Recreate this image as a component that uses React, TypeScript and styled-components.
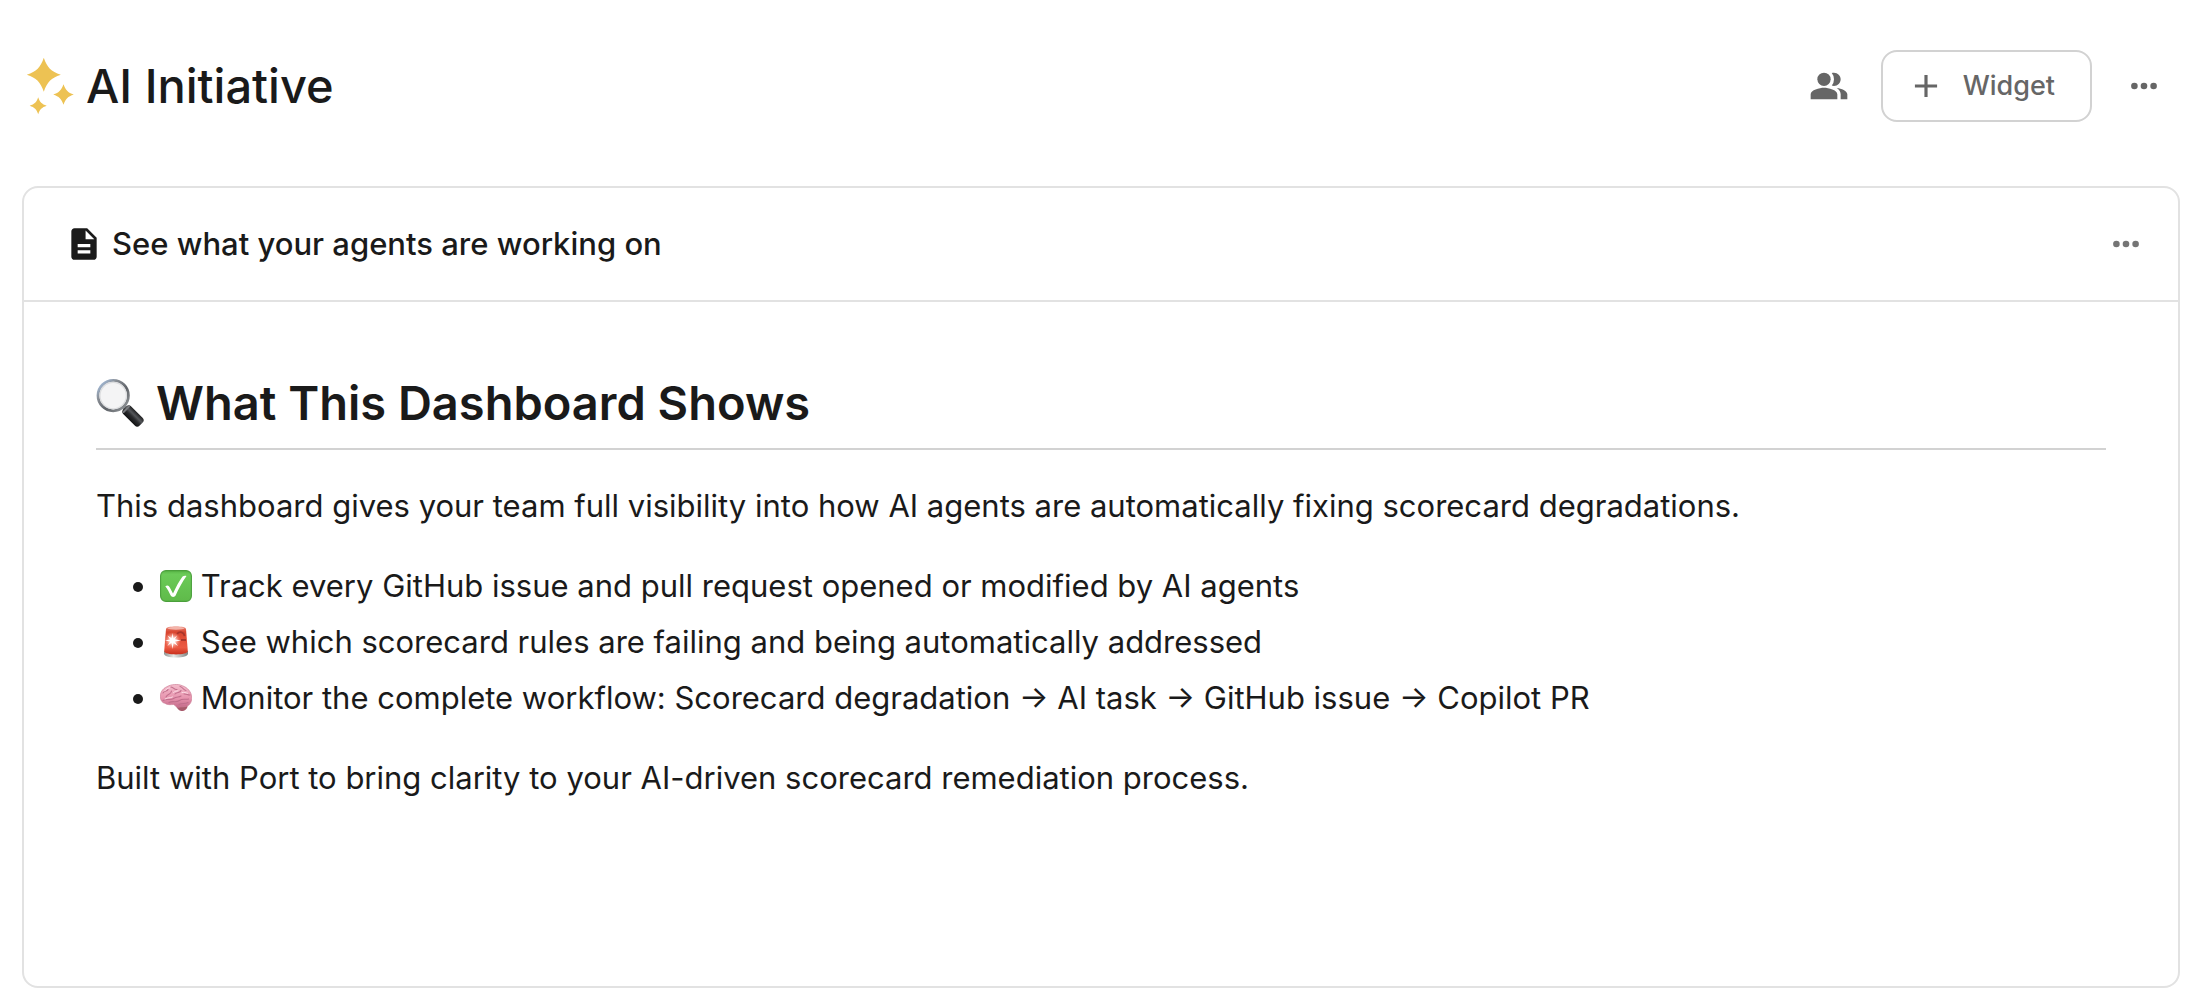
import React from 'react';
import styled, { createGlobalStyle } from 'styled-components';
import { MdAdd, MdDescription, MdPeopleAlt } from 'react-icons/md';

const GlobalStyle = createGlobalStyle`
  *, *::before, *::after { box-sizing: border-box; }
  body {
    margin: 0;
    background: #ffffff;
    color: #1a1a1a;
    font-family: Inter, 'Liberation Sans', sans-serif;
    font-size: 31px;
    line-height: 48px;
  }
`;

const Page = styled.div`
  display: flex;
  flex-direction: column;
  gap: 64px;
  min-height: 100vh;
  padding: 50px 30px 8px 22px;
`;

const PageHeader = styled.header`
  display: flex;
  align-items: center;
  justify-content: space-between;
  padding: 0 16px 0 4px;
`;

const PageTitle = styled.h1`
  display: flex;
  align-items: center;
  gap: 10px;
  margin: 0;
  font-size: 47px;
  font-weight: 500;
  line-height: 58px;
`;

const Actions = styled.div`
  display: flex;
  align-items: center;
  gap: 32px;
`;

const IconButton = styled.button<{ $tone?: string }>`
  display: flex;
  padding: 0;
  border: 0;
  background: none;
  color: ${({ $tone }) => $tone ?? '#666666'};
  cursor: pointer;
`;

const WidgetButton = styled.button`
  display: flex;
  align-items: center;
  gap: 18px;
  height: 72px;
  padding: 0 35px 0 24px;
  border: 2px solid #d2d2d2;
  border-radius: 16px;
  background: #ffffff;
  color: #666666;
  font: inherit;
  font-size: 27px;
  font-weight: 500;
  cursor: pointer;
`;

const Card = styled.section`
  flex: 1;
  border: 2px solid #e2e2e2;
  border-radius: 16px;
`;

const CardHeader = styled.div`
  display: flex;
  align-items: center;
  justify-content: space-between;
  padding: 32px 32px 32px 41px;
  border-bottom: 2px solid #e2e2e2;
`;

const CardTitle = styled.h2`
  display: flex;
  align-items: center;
  gap: 9px;
  margin: 0;
  font-size: 31px;
  font-weight: 500;
`;

const Markdown = styled.article`
  display: flex;
  flex-direction: column;
  gap: 32px;
  padding: 72px;
`;

const Heading = styled.h3`
  display: flex;
  align-items: center;
  gap: 12px;
  margin: 0;
  padding-bottom: 16px;
  border-bottom: 2px solid #d2d2d2;
  font-size: 47px;
  font-weight: 600;
  line-height: 58px;
`;

const Paragraph = styled.p`
  margin: 0;
`;

const List = styled.ul`
  display: flex;
  flex-direction: column;
  gap: 8px;
  margin: 0;
  padding-left: 64px;
`;

const Emoji = styled.svg<{ $size: number }>`
  width: ${({ $size }) => $size}px;
  height: ${({ $size }) => $size}px;
  vertical-align: -5px;
`;

const star = (cx: number, cy: number, r: number) => {
  const a = r * 0.2;
  const b = r * 0.42;
  return (
    `M${cx} ${cy - r}C${cx + a} ${cy - b} ${cx + b} ${cy - a} ${cx + r} ${cy}` +
    `C${cx + b} ${cy + a} ${cx + a} ${cy + b} ${cx} ${cy + r}` +
    `C${cx - a} ${cy + b} ${cx - b} ${cy + a} ${cx - r} ${cy}` +
    `C${cx - b} ${cy - a} ${cx - a} ${cy - b} ${cx} ${cy - r}Z`
  );
};

const Sparkles = () => (
  <svg width="50" height="58" viewBox="0 0 50 58" fill="#edc253" aria-hidden="true">
    <path d={star(17.8, 17.8, 17)} />
    <path d={star(37.5, 37.5, 10.3)} />
    <path d={star(12.2, 48.7, 8.5)} />
  </svg>
);

const Dots = () => (
  <svg width="40" height="40" viewBox="0 0 40 40" fill="currentColor" aria-hidden="true">
    <circle cx="10.4" cy="20" r="3.3" />
    <circle cx="20" cy="20" r="3.3" />
    <circle cx="29.6" cy="20" r="3.3" />
  </svg>
);

const Magnifier = () => (
  <Emoji $size={48} viewBox="0 0 48 48" role="img" aria-label="🔍">
    <defs>
      <linearGradient id="rim" x1="0" y1="0" x2="1" y2="1">
        <stop offset="0" stopColor="#a9c8ee" />
        <stop offset="0.3" stopColor="#8a8f96" />
        <stop offset="0.6" stopColor="#5f6368" />
        <stop offset="1" stopColor="#9b9fa3" />
      </linearGradient>
      <linearGradient id="handle" x1="0" y1="0" x2="0" y2="1">
        <stop offset="0" stopColor="#1e1e20" />
        <stop offset="0.35" stopColor="#55575b" />
        <stop offset="0.6" stopColor="#2a2b2e" />
        <stop offset="1" stopColor="#111112" />
      </linearGradient>
    </defs>
    <path d="M27 27l5 5" stroke="#77797c" strokeWidth="5" />
    <g transform="translate(28.5 28.5) rotate(45)">
      <rect x="0.5" y="-5.5" width="23" height="11" rx="3.5" fill="url(#handle)" />
      <rect x="1.5" y="-4.8" width="2" height="9.6" rx="1" fill="#77797d" />
    </g>
    <circle cx="17.2" cy="16.6" r="15.2" fill="#f4f4f5" stroke="url(#rim)" strokeWidth="2.8" />
    <circle cx="17.2" cy="16.6" r="13.2" fill="none" stroke="#dcdddf" strokeWidth="1.2" />
  </Emoji>
);

const CheckMark = () => (
  <Emoji $size={32} viewBox="0 0 32 32" role="img" aria-label="✅">
    <defs>
      <linearGradient id="green" x1="0" y1="0" x2="0" y2="1">
        <stop offset="0" stopColor="#58b546" />
        <stop offset="0.12" stopColor="#6bcb58" />
        <stop offset="1" stopColor="#5fba4a" />
      </linearGradient>
    </defs>
    <rect x="0.6" y="0.6" width="30.8" height="30.8" rx="5.4" fill="url(#green)" stroke="#4a9f3b" strokeWidth="1.1" />
    <path
      d="M5.3 16.2C7.6 15 8.8 15.6 9.8 17.6L13 23.6C16 17 19.4 10.8 22.6 6.6C23.5 5.6 25.2 5.6 26.5 5.9C22 12.4 18.6 18.6 15.6 25.6C14.8 27.2 11.6 27.4 10.7 25.6C9.2 22.2 7.6 19 5.3 16.2Z"
      fill="#ffffff"
    />
  </Emoji>
);

const Siren = () => (
  <Emoji $size={32} viewBox="0 0 32 32" role="img" aria-label="🚨">
    <defs>
      <linearGradient id="dome" x1="0" y1="0" x2="0" y2="1">
        <stop offset="0" stopColor="#e98273" />
        <stop offset="0.2" stopColor="#d8452f" />
        <stop offset="0.75" stopColor="#ec5a43" />
        <stop offset="1" stopColor="#c9301d" />
      </linearGradient>
      <linearGradient id="base" x1="0" y1="0" x2="1" y2="0">
        <stop offset="0" stopColor="#8e9290" />
        <stop offset="0.4" stopColor="#e6e9e8" />
        <stop offset="1" stopColor="#7f8482" />
      </linearGradient>
      <radialGradient id="flash">
        <stop offset="0" stopColor="#ffffff" />
        <stop offset="0.4" stopColor="#ffd9d0" stopOpacity="0.85" />
        <stop offset="1" stopColor="#f48a78" stopOpacity="0" />
      </radialGradient>
    </defs>
    <path d="M4 25V27.5C4 30.2 9 31.6 16 31.6S28 30.2 28 27.5V25Z" fill="url(#base)" />
    <path
      d="M6 3C6.3 1 10 0.4 16 0.4S25.7 1 26 3L27.8 25C27.8 27.4 22 28.4 16 28.4S4.2 27.4 4.2 25Z"
      fill="url(#dome)"
    />
    <ellipse cx="16" cy="2.3" rx="8.5" ry="1.5" fill="#f3b4aa" />
    <path d="M17 8C20 4.6 24 6.5 24.6 10M21 14H26" fill="none" stroke="#a8352b" strokeWidth="1.8" />
    <circle cx="12.5" cy="14.5" r="8.5" fill="url(#flash)" />
    <path
      d="M12.5 7L13.4 12.4L17.4 9.3L14.6 13.3L21 14.4L14.7 15.4L18 20L13.5 16.9L12.6 23L11.5 16.8L7.4 20L10.2 15.4L5 14.6L10.2 13.4L7.5 9.4L11.6 12.3Z"
      fill="#ffffff"
    />
  </Emoji>
);

const Brain = () => (
  <Emoji $size={32} viewBox="0 0 32 32" role="img" aria-label="🧠">
    <defs>
      <linearGradient id="cortex" x1="0" y1="0" x2="0" y2="1">
        <stop offset="0" stopColor="#f3bccb" />
        <stop offset="0.6" stopColor="#e794ae" />
        <stop offset="1" stopColor="#c46a8a" />
      </linearGradient>
    </defs>
    <path d="M16 23C19 22 26 21 27.5 23.5C28 27.5 23 29.8 20.5 28.8C18.5 28 16 25.5 16 23Z" fill="#a85a6c" />
    <path
      d="M0.5 16C-0.3 11 2.5 6.5 7 4.7C11 2.2 18 1.7 22.5 3.8C27.5 5.5 31.5 10 31.6 15C32.2 19 30 23.5 26.5 24.3C23 25.2 20.5 24.5 18.5 25.3C16.5 25.8 15.5 23.5 13.5 22.5C11 22.6 7 23.2 5 21.3C2.5 21 0.7 18.5 0.5 16Z"
      fill="url(#cortex)"
      stroke="#cf7f98"
      strokeWidth="0.7"
    />
    <path
      d="M3 11C5 8 7 10 8 7.5M6 15C8 11.5 11 13 11.5 9M11 5C14 5.5 14 8 17 7.5M15 12C17 9.5 20 11.5 21 8.5M20 4.5C23 5 23 8 26 8.5M24 12C26.5 11.5 28 13.5 30 13M3 18.5C7 16 10 19 13.5 16.5S19 16 21 14M9 20.5C13 18.5 16 21 19.5 18.5S26 18 28.5 17M19 22.5C22 20.5 25 22.5 28 20.5"
      fill="none"
      stroke="#c06f8c"
      strokeWidth="1.1"
      strokeLinecap="round"
    />
    <path
      d="M4.5 9C6 7 8 6 9.5 5.8M13.5 10.5C15 9 16.5 9.3 18 8.8M22 10.5C24 10 26 10.8 27.5 11.2M5 17C8 15 10 16.5 12.5 15"
      fill="none"
      stroke="#fbdbe4"
      strokeWidth="1"
      strokeLinecap="round"
    />
  </Emoji>
);

export default function App() {
  return (
    <>
      <GlobalStyle />
      <Page>
        <PageHeader>
          <PageTitle>
            <Sparkles />
            AI Initiative
          </PageTitle>
          <Actions>
            <IconButton type="button" aria-label="Permissions">
              <MdPeopleAlt size={40} />
            </IconButton>
            <WidgetButton type="button">
              <MdAdd size={38} />
              Widget
            </WidgetButton>
            <IconButton type="button" aria-label="Page options">
              <Dots />
            </IconButton>
          </Actions>
        </PageHeader>
        <Card>
          <CardHeader>
            <CardTitle>
              <MdDescription size={38} />
              See what your agents are working on
            </CardTitle>
            <IconButton type="button" aria-label="Widget options" $tone="#757575">
              <Dots />
            </IconButton>
          </CardHeader>
          <Markdown>
            <Heading>
              <Magnifier />
              What This Dashboard Shows
            </Heading>
            <Paragraph>
              This dashboard gives your team full visibility into how AI agents are automatically fixing scorecard
              degradations.
            </Paragraph>
            <List>
              <li>
                <CheckMark /> Track every GitHub issue and pull request opened or modified by AI agents
              </li>
              <li>
                <Siren /> See which scorecard rules are failing and being automatically addressed
              </li>
              <li>
                <Brain /> Monitor the complete workflow: Scorecard degradation → AI task → GitHub issue → Copilot PR
              </li>
            </List>
            <Paragraph>Built with Port to bring clarity to your AI-driven scorecard remediation process.</Paragraph>
          </Markdown>
        </Card>
      </Page>
    </>
  );
}
